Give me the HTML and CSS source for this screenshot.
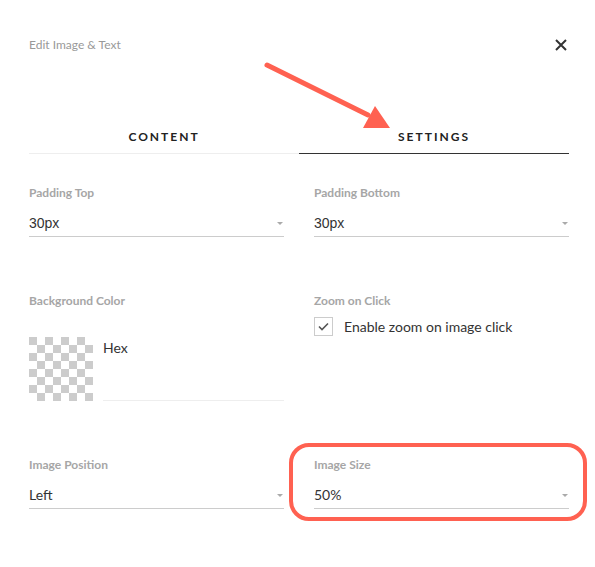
FILE: index.html
```html
<!DOCTYPE html>
<html>
<head>
<meta charset="utf-8">
<link rel="stylesheet" href="styles.css">
</head>
<body>
<div class="page">
  <div class="header">
    <span class="title">Edit Image &amp; Text</span>
    <svg class="close" width="12" height="12" viewBox="0 0 12 12"><path d="M1 1 L11 11 M11 1 L1 11" stroke="#333" stroke-width="2" fill="none"/></svg>
  </div>
  <div class="tabs">
    <div class="tab">CONTENT</div>
    <div class="tab active">SETTINGS</div>
  </div>
  <div class="fields">
    <div class="field">
      <div class="label">Padding Top</div>
      <div class="select mono"><span>30px</span><i class="caret"></i></div>
    </div>
    <div class="field">
      <div class="label">Padding Bottom</div>
      <div class="select mono"><span>30px</span><i class="caret"></i></div>
    </div>
    <div class="field">
      <div class="label">Background Color</div>
      <div class="color">
        <div class="swatch"></div>
        <div class="hex">Hex</div>
      </div>
    </div>
    <div class="field">
      <div class="label">Zoom on Click</div>
      <div class="check">
        <span class="box"><svg width="11" height="9" viewBox="0 0 11 9"><path d="M1 4.5 L4 7.5 L10 1.5" stroke="#555" stroke-width="1.6" fill="none"/></svg></span>
        <span class="check-text">Enable zoom on image click</span>
      </div>
    </div>
    <div class="field">
      <div class="label">Image Position</div>
      <div class="select"><span>Left</span><i class="caret"></i></div>
    </div>
    <div class="field">
      <div class="label">Image Size</div>
      <div class="select"><span>50%</span><i class="caret"></i></div>
    </div>
  </div>
  <div class="highlight"></div>
  <svg class="arrow" width="140" height="80" viewBox="0 0 140 80">
    <line x1="7" y1="10" x2="108" y2="60" stroke="#ff6151" stroke-width="5" stroke-linecap="round"/>
    <polygon points="115,51 103,73 130,73" fill="#ff6151"/>
  </svg>
</div>
</body>
</html>
```

FILE: styles.css
```css
html, body {
  margin: 0;
  padding: 0;
  background: #fff;
}
.page {
  position: relative;
  width: 595px;
  height: 567px;
  padding: 0 26px 0 29px;
  box-sizing: border-box;
  font-family: Lato, "Open Sans", sans-serif;
  color: #333;
}
.header {
  display: flex;
  justify-content: space-between;
  align-items: center;
  padding-top: 35px;
  height: 20px;
}
.title {
  font-size: 12px;
  line-height: 20px;
  color: #999;
}
.close {
  margin-right: 2px;
}
.tabs {
  display: grid;
  grid-template-columns: 1fr 1fr;
  margin-top: 65px;
}
.tab {
  height: 32px;
  padding-top: 1px;
  line-height: 32px;
  text-align: center;
  font-size: 12px;
  font-weight: 700;
  letter-spacing: 2px;
  color: #222;
  border-bottom: 1px solid #eee;
}
.tab.active {
  border-bottom-color: #333;
}
.fields {
  display: grid;
  grid-template-columns: 255px 255px;
  column-gap: 30px;
  row-gap: 56px;
  margin-top: 31px;
}
.label {
  font-size: 12px;
  font-weight: 700;
  line-height: 16px;
  color: #a6a6a6;
}
.select {
  margin-top: 7px;
  padding-top: 2px;
  height: 26px;
  line-height: 26px;
  font-size: 14px;
  color: #333;
  border-bottom: 1px solid #ccc;
  display: flex;
  justify-content: space-between;
  align-items: center;
}
.select.mono {
  font-family: "Liberation Sans", Arial, sans-serif;
}
.caret {
  width: 0;
  height: 0;
  border-left: 3px solid transparent;
  border-right: 3px solid transparent;
  border-top: 3px solid #aaa;
  margin-right: 1px;
}
.color {
  display: flex;
  gap: 10px;
  margin-top: 28px;
}
.swatch {
  width: 64px;
  height: 64px;
  background-color: #fff;
  background-image:
    linear-gradient(45deg, #ccc 25%, transparent 25%, transparent 75%, #ccc 75%),
    linear-gradient(45deg, #ccc 25%, transparent 25%, transparent 75%, #ccc 75%);
  background-size: 16px 16px;
  background-position: 8px 0, 0 8px;
}
.hex {
  flex: 1;
  font-size: 14px;
  line-height: 20px;
  padding-top: 1px;
  height: 62px;
  border-bottom: 1px solid #eee;
  color: #333;
}
.check {
  display: flex;
  align-items: center;
  gap: 11px;
  margin-top: 8px;
}
.box {
  width: 17px;
  height: 17px;
  border: 1px solid #ccc;
  display: flex;
  align-items: center;
  justify-content: center;
}
.check-text {
  font-size: 14px;
  color: #333;
}
.highlight {
  position: absolute;
  left: 289px;
  top: 443px;
  width: 290px;
  height: 70px;
  border: 4px solid #ff6151;
  border-radius: 20px;
}
.arrow {
  position: absolute;
  left: 260px;
  top: 55px;
}
```
